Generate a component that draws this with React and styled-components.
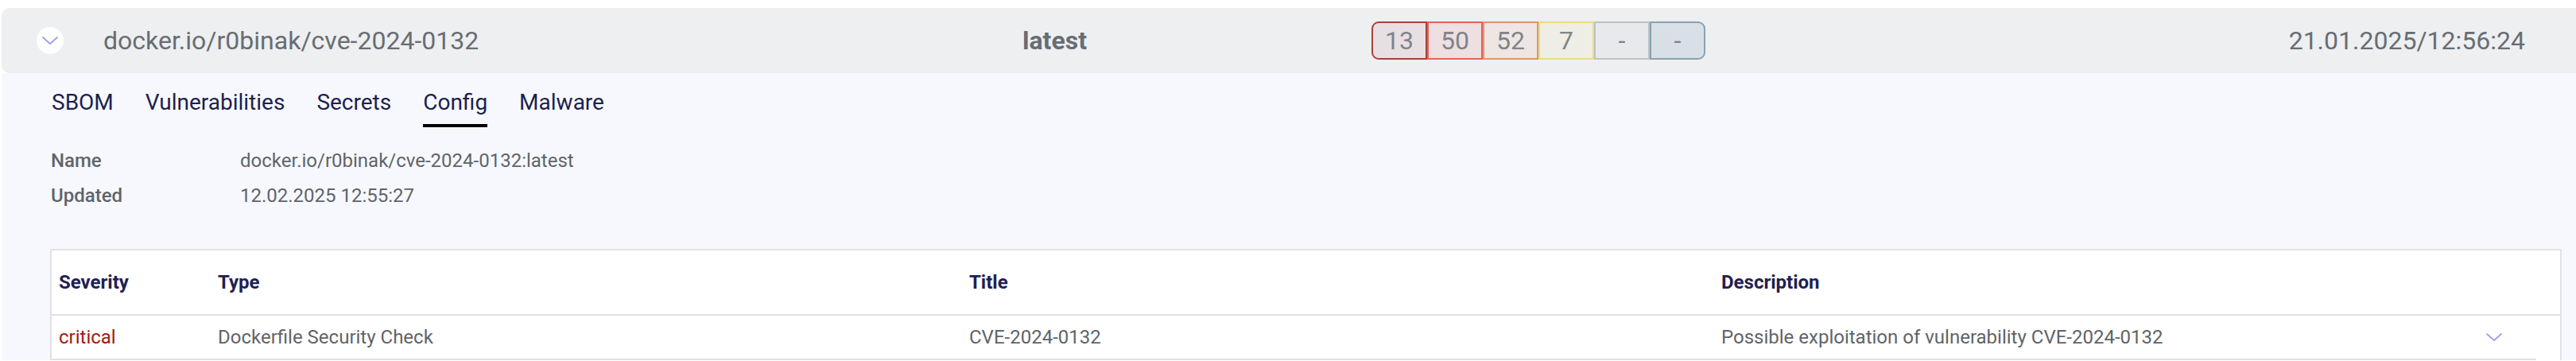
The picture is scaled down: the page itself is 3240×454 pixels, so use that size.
import React from "react";
import styled, { createGlobalStyle } from "styled-components";

const Global = createGlobalStyle`
  html, body { margin: 0; padding: 0; background: #ffffff; }
  body { font-family: Roboto, "Liberation Sans", Arial, sans-serif; }
  #root { padding: 10px 0 0 2px; }
`;

const Card = styled.section`
  display: flex;
  flex-direction: column;
`;

const HeaderBar = styled.header`
  display: grid;
  grid-template-columns: 34px 1206px 439px auto 1fr;
  align-items: center;
  height: 82px;
  padding: 0 64px 0 44px;
  background: #eeeff1;
  border-radius: 10px 0 0 10px;
  color: #686d72;
  font-size: 32px;
`;

const ToggleButton = styled.span`
  width: 34px;
  height: 34px;
  border-radius: 50%;
  background: #ffffff;
  display: flex;
  align-items: center;
  justify-content: center;
`;

const ImageName = styled.span`
  margin-left: 50px;
  white-space: nowrap;
`;

const Tag = styled.span`
  font-weight: 700;
`;

const Counts = styled.div`
  display: flex;
`;

const Count = styled.span`
  width: 70px;
  height: 48px;
  box-sizing: border-box;
  display: flex;
  align-items: center;
  justify-content: center;
  border: 2px solid ${(p) => p.$border};
  background: ${(p) => p.$bg};
  color: #7f8488;
  font-size: 32px;
  &:first-child { border-radius: 9px 0 0 9px; }
  &:last-child { border-radius: 0 9px 9px 0; }
`;

const Stamp = styled.span`
  justify-self: end;
  white-space: nowrap;
`;

const Panel = styled.div`
  background: #f7f8fd;
  padding: 20px 18px 0 62px;
  display: flex;
  flex-direction: column;
`;

const Tabs = styled.nav`
  display: flex;
  gap: 40px;
  padding-left: 1px;
`;

const Tab = styled.span`
  font-size: 28px;
  color: #1d1f4f;
  padding-bottom: 11px;
  border-bottom: 4px solid ${(p) => (p.$active ? "#000000" : "transparent")};
`;

const Details = styled.dl`
  display: grid;
  grid-template-columns: 238px 1fr;
  margin: 20px 0 0;
  font-size: 24px;
  line-height: 44px;
  color: #5f6469;
`;

const Label = styled.dt`
  font-weight: 500;
`;

const Value = styled.dd`
  margin: 0;
`;

const Table = styled.table`
  margin: 45px 0 0 -1px;
  width: calc(100% + 1px);
  table-layout: fixed;
  border-collapse: separate;
  border-spacing: 0;
  border: 2px solid #e1e1e3;
  border-bottom: none;
  background: #ffffff;
  font-size: 24px;
`;

const HeadCell = styled.th`
  height: 80px;
  padding: 0 0 0 9px;
  text-align: left;
  font-weight: 700;
  color: #1f2152;
  border-bottom: 2px solid #e1e1e3;
`;

const Cell = styled.td`
  height: 54px;
  padding: 0 0 0 9px;
  color: ${(p) => p.$color || "#5f6469"};
  border-bottom: ${(p) => (p.$noLine ? "none" : "2px solid #e1e1e3")};
  white-space: nowrap;
`;

const ChevronCell = styled(Cell)`
  padding: 0;
  text-align: center;
  line-height: 0;
`;

const Chevron = () => (
  <svg width="20" height="10" viewBox="0 0 20 10" fill="none">
    <polyline
      points="1,1 10,9 19,1"
      stroke="#9c9ff0"
      strokeWidth="1.8"
      strokeLinecap="round"
      strokeLinejoin="round"
    />
  </svg>
);

const counts = [
  { v: "13", border: "#a8413b", bg: "#e8dfe3" },
  { v: "50", border: "#e8615b", bg: "#eddfe2" },
  { v: "52", border: "#e0966c", bg: "#eee6e4" },
  { v: "7", border: "#ecdc80", bg: "#eeeee6" },
  { v: "-", border: "#c0c1c3", bg: "#e8e9ec" },
  { v: "-", border: "#87a3b5", bg: "#d8dfe6" },
];

const tabs = ["SBOM", "Vulnerabilities", "Secrets", "Config", "Malware"];

export default function App() {
  return (
    <>
      <Global />
      <Card>
        <HeaderBar>
          <ToggleButton>
            <Chevron />
          </ToggleButton>
          <ImageName>docker.io/r0binak/cve-2024-0132</ImageName>
          <Tag>latest</Tag>
          <Counts>
            {counts.map((c, i) => (
              <Count key={i} $border={c.border} $bg={c.bg}>
                {c.v}
              </Count>
            ))}
          </Counts>
          <Stamp>21.01.2025/12:56:24</Stamp>
        </HeaderBar>
        <Panel>
          <Tabs>
            {tabs.map((t) => (
              <Tab key={t} $active={t === "Config"}>
                {t}
              </Tab>
            ))}
          </Tabs>
          <Details>
            <Label>Name</Label>
            <Value>docker.io/r0binak/cve-2024-0132:latest</Value>
            <Label>Updated</Label>
            <Value>12.02.2025 12:55:27</Value>
          </Details>
          <Table>
            <colgroup>
              <col style={{ width: 200 }} />
              <col style={{ width: 945 }} />
              <col style={{ width: 946 }} />
              <col />
              <col style={{ width: 106 }} />
              <col style={{ width: 30 }} />
            </colgroup>
            <thead>
              <tr>
                <HeadCell>Severity</HeadCell>
                <HeadCell>Type</HeadCell>
                <HeadCell>Title</HeadCell>
                <HeadCell>Description</HeadCell>
                <HeadCell />
                <HeadCell />
              </tr>
            </thead>
            <tbody>
              <tr>
                <Cell $color="#9e1c15">critical</Cell>
                <Cell>Dockerfile Security Check</Cell>
                <Cell>CVE-2024-0132</Cell>
                <Cell>Possible exploitation of vulnerability CVE-2024-0132</Cell>
                <ChevronCell>
                  <Chevron />
                </ChevronCell>
                <Cell $noLine />
              </tr>
            </tbody>
          </Table>
        </Panel>
      </Card>
    </>
  );
}
